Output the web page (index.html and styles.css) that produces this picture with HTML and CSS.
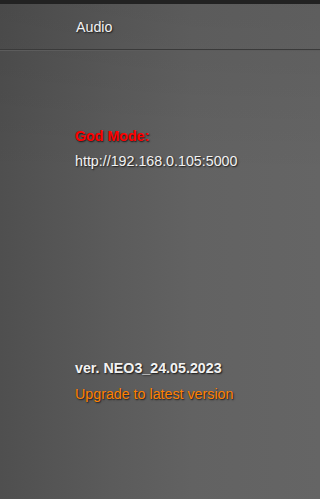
FILE: index.html
```html
<!DOCTYPE html>
<html>
<head>
<meta charset="utf-8">
<link rel="stylesheet" href="styles.css">
</head>
<body>
<div class="topstrip"></div>
<header class="header"><span class="title">Audio</span></header>
<main class="content">
  <section class="god">
    <div class="god-label">God Mode:</div>
    <div class="god-url">http://192.168.0.105:5000</div>
  </section>
  <section class="version">
    <div class="ver">ver. NEO3_24.05.2023</div>
    <div class="upgrade">Upgrade to latest version</div>
  </section>
</main>
</body>
</html>
```
FILE: styles.css
```css
html, body {
  margin: 0;
  padding: 0;
  height: 100%;
}
body {
  font-family: "Liberation Sans", Arial, sans-serif;
  font-size: 14.25px;
  color: #f2f2f2;
  background:
    linear-gradient(180deg, rgba(0,0,0,0.08) 0%, rgba(0,0,0,0) 35%),
    linear-gradient(90deg, #4f4f4f 0%, #5b5b5b 35%, #626262 60%, #656565 100%);
  text-shadow: 1px 1px 1.5px #1a1a1a;
  display: flex;
  flex-direction: column;
}
.topstrip {
  height: 4px;
  background: #222222;
}
.header {
  height: 46px;
  border-bottom: 1px solid #3a3a3a;
  box-shadow: 0 1px 0 #5c5c5c;
  display: flex;
  align-items: center;
  padding-left: 76px;
  box-sizing: border-box;
}
.title {
  font-size: 14.25px;
}
.content {
  padding-left: 75px;
  flex: 1;
  display: flex;
  flex-direction: column;
}
.god {
  margin-top: 78px;
}
.god-label {
  color: #ff0000;
  font-weight: bold;
  line-height: 16px;
}
.god-url {
  margin-top: 9px;
  line-height: 16px;
}
.version {
  margin-top: 191px;
}
.ver {
  font-weight: bold;
  line-height: 16px;
}
.upgrade {
  color: #ff8000;
  margin-top: 10px;
  line-height: 16px;
}
```
